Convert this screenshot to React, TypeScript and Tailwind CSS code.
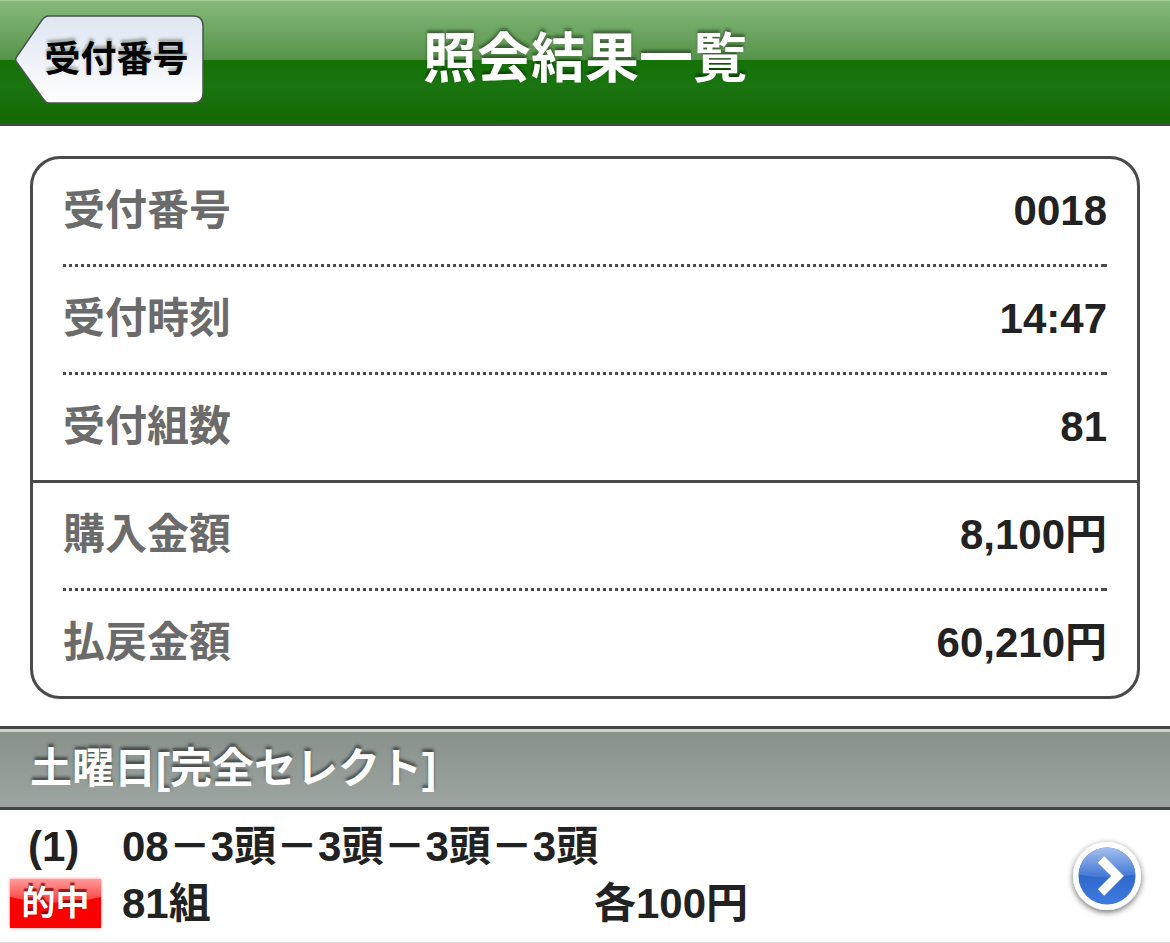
import type { ReactNode } from "react";

type Entry = { label: string; value: string };

const receipt: Entry[] = [
  { label: "受付番号", value: "0018" },
  { label: "受付時刻", value: "14:47" },
  { label: "受付組数", value: "81" },
];

const amounts: Entry[] = [
  { label: "購入金額", value: "8,100円" },
  { label: "払戻金額", value: "60,210円" },
];

function DottedRule() {
  return (
    <div
      aria-hidden="true"
      className="h-[3px] border-r-3 border-[#4a4a4a] bg-[repeating-linear-gradient(90deg,#4a4a4a_0_3px,transparent_3px_6px)]"
    />
  );
}

function EntryGroup({ entries }: { entries: Entry[] }) {
  return (
    <dl className="px-[30px]">
      {entries.map((entry, i) => (
        <div key={entry.label}>
          {i > 0 && <DottedRule />}
          <div className="flex h-[105px] items-center justify-between pb-[2px] leading-[48px]">
            <dt className="text-[#6b6b6b]">{entry.label}</dt>
            <dd>{entry.value}</dd>
          </div>
        </div>
      ))}
    </dl>
  );
}

function BackButton({ children }: { children: ReactNode }) {
  return (
    <button
      type="button"
      className="absolute top-[14px] left-[15px] h-[90px] w-[189px] pl-[14px] text-[36px] leading-[40px] font-bold text-black [text-shadow:0_-3px_3px_rgba(40,60,40,0.4)]"
    >
      <svg
        aria-hidden="true"
        viewBox="0 0 189 90"
        className="absolute inset-0 h-full w-full"
      >
        <defs>
          <linearGradient id="back-fill" x1="0" y1="0" x2="0" y2="1">
            <stop offset="0" stopColor="#dde6f1" />
            <stop offset="0.5" stopColor="#eef1f8" />
            <stop offset="1" stopColor="#ffffff" />
          </linearGradient>
        </defs>
        <path
          d="M34 1H178Q188 1 188 11V78Q188 88 178 88H34Q31 88 29 85L1.500 47Q0 44.500 1.500 42L27 5Q30 1 34 1Z"
          fill="url(#back-fill)"
          stroke="#4a544a"
          strokeWidth="1.500"
        />
      </svg>
      <span className="relative">{children}</span>
    </button>
  );
}

function HitBadge() {
  return (
    <span className="relative flex h-[49px] w-[91px] items-center justify-center overflow-hidden bg-[#fb0000] pb-[2px] text-[34px] leading-[40px] text-white shadow-[0_0_3px_rgba(255,80,80,0.7)] [text-shadow:0_-3px_1px_rgba(110,0,0,0.75)]">
      <svg
        aria-hidden="true"
        viewBox="0 0 91 49"
        className="absolute inset-0 h-full w-full"
      >
        <defs>
          <linearGradient id="badge-gloss" x1="0" y1="0" x2="0" y2="1">
            <stop offset="0" stopColor="#ff9a9a" />
            <stop offset="1" stopColor="#ff3c3c" />
          </linearGradient>
        </defs>
        <path d="M0 0H91V18Q45 29 0 18Z" fill="url(#badge-gloss)" />
      </svg>
      <span className="relative">的中</span>
    </span>
  );
}

function ArrowIcon() {
  return (
    <svg
      aria-hidden="true"
      viewBox="0 0 84 84"
      className="h-[84px] w-[84px] overflow-visible"
    >
      <defs>
        <linearGradient id="arrow-base" x1="0" y1="0" x2="0" y2="1">
          <stop offset="0" stopColor="#3b70cf" />
          <stop offset="0.5" stopColor="#3168cd" />
          <stop offset="1" stopColor="#3e7ce0" />
        </linearGradient>
        <linearGradient id="arrow-gloss" x1="0" y1="0" x2="0" y2="1">
          <stop offset="0" stopColor="#a9c3ee" />
          <stop offset="1" stopColor="#3f76d4" />
        </linearGradient>
        <clipPath id="arrow-disc">
          <circle cx="42" cy="42" r="28.500" />
        </clipPath>
        <filter id="arrow-shadow" x="-20%" y="-20%" width="140%" height="140%">
          <feDropShadow dx="0" dy="2" stdDeviation="3" floodOpacity="0.6" />
        </filter>
      </defs>
      <circle cx="42" cy="42" r="34" fill="#fff" filter="url(#arrow-shadow)" />
      <circle cx="42" cy="42" r="28.500" fill="url(#arrow-base)" />
      <path
        d="M12 12H72V40Q42 47 12 40Z"
        fill="url(#arrow-gloss)"
        clipPath="url(#arrow-disc)"
      />
      <path d="M36 25.500L52.500 42L36 58.500" fill="none" stroke="#fff" strokeWidth="9" />
    </svg>
  );
}

export default function App() {
  return (
    <div className="min-h-screen bg-white font-['Liberation_Sans','Noto_Sans_CJK_JP',sans-serif] text-[42px] font-bold text-[#222]">
      <header className="relative flex h-[126px] items-center justify-center border-t border-b-3 border-t-[#a4cf98] border-b-[#444b44] bg-[linear-gradient(180deg,#86b97c_0,#559349_59px,#147206_59px,#1a7410_85px,#146a02_100%)]">
        <BackButton>受付番号</BackButton>
        <h1 className="pb-[6px] text-[54px] leading-[60px] text-white [text-shadow:0_-3px_3px_rgba(0,0,0,0.4)]">
          照会結果一覧
        </h1>
      </header>

      <main>
        <section className="mx-[30px] mt-[30px] mb-[27px] rounded-[30px] border-3 border-[#4a4a4a]">
          <EntryGroup entries={receipt} />
          <div aria-hidden="true" className="h-[3px] bg-[#4a4a4a]" />
          <EntryGroup entries={amounts} />
        </section>

        <h2 className="flex h-[84px] items-center border-y-3 border-[#444745] bg-[linear-gradient(180deg,#ccd2cd_0_3px,#89918c_3px,#9ca5a1_100%)] px-[30px] pt-[2px] leading-[48px] text-white [text-shadow:0_-3px_3px_rgba(0,0,0,0.5)]">
          土曜日[完全セレクト]
        </h2>

        <a
          href="#bet-1"
          className="flex h-[133px] items-center border-b border-[#ddd] pr-[21px] pl-[10px]"
        >
          <div className="grid flex-1 grid-cols-[112px_472px_1fr] grid-rows-[57px_57px] items-center pb-[2px] leading-[48px]">
            <span className="pl-[18px]">(1)</span>
            <span className="col-span-2 whitespace-nowrap">08－3頭－3頭－3頭－3頭</span>
            <HitBadge />
            <span>81組</span>
            <span>各100円</span>
          </div>
          <ArrowIcon />
        </a>
      </main>
    </div>
  );
}
